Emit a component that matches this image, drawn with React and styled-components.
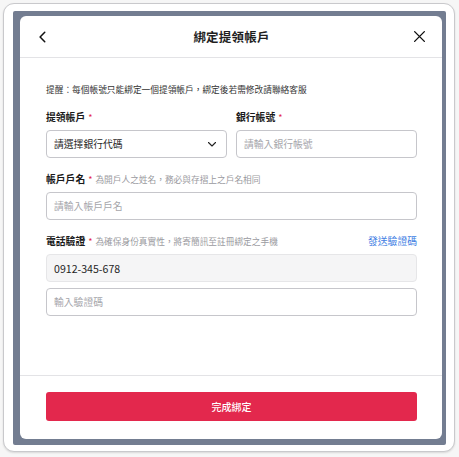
import React from 'react'
import styled, { createGlobalStyle } from 'styled-components'

const GlobalStyle = createGlobalStyle`
  html, body {
    margin: 0;
    padding: 0;
    background: #f6f6f6;
  }
  body {
    font-family: "Noto Sans CJK TC", "Noto Sans", "Liberation Sans", sans-serif;
    color: #1f1f1f;
  }
`

const Page = styled.div`
  width: 459px;
  height: 457px;
  padding: 3px 4px 5px 3px;
  box-sizing: border-box;
`

const Card = styled.div`
  height: 100%;
  box-sizing: border-box;
  background: #fff;
  border: 1px solid #c9c9cc;
  border-radius: 11px;
  box-shadow: 0 1px 2px rgba(0, 0, 0, 0.12);
  padding: 7px 8px 6px 9px;
`

const Frame = styled.div`
  height: 100%;
  box-sizing: border-box;
  background: #737d91;
  border-radius: 2px;
  padding: 5px 4px 6px 7px;
`

const Modal = styled.div`
  height: 100%;
  background: #fff;
  border-radius: 6px;
  display: flex;
  flex-direction: column;
  overflow: hidden;
`

const Header = styled.div`
  height: 41px;
  flex: none;
  display: flex;
  align-items: center;
  justify-content: space-between;
  padding: 0 14px 0 15px;
  border-bottom: 1px solid #e3e3e6;
`

const IconButton = styled.button`
  width: 16px;
  height: 16px;
  padding: 0;
  border: none;
  background: none;
  display: flex;
  align-items: center;
  justify-content: center;
  color: #111;
`

const Title = styled.h1`
  margin: 0;
  font-size: 12.5px;
  font-weight: 700;
  letter-spacing: 0.2px;
`

const Body = styled.div`
  flex: 1;
  padding: 25px 25px 0 26px;
`

const Notice = styled.p`
  margin: 0 0 13px;
  font-size: 8.7px;
  line-height: 14px;
  color: #333;
`

const Row = styled.div`
  display: grid;
  grid-template-columns: ${(p) => p.$cols || '1fr'};
  column-gap: 9px;
  margin-bottom: ${(p) => p.$gap ?? 14}px;
`

const Field = styled.div`
  display: flex;
  flex-direction: column;
`

const LabelLine = styled.div`
  display: flex;
  align-items: baseline;
  height: 14px;
  margin-bottom: 6px;
`

const Label = styled.span`
  font-size: 9.8px;
  font-weight: 700;
  color: #1a1a1a;
`

const Star = styled.span`
  color: #e3284d;
  font-size: 9px;
  margin: 0 3px 0 3px;
`

const Hint = styled.span`
  font-size: 8.7px;
  color: #9a9aa0;
`

const Link = styled.a`
  margin-left: auto;
  font-size: 9.8px;
  color: #3d7de3;
  text-decoration: none;
`

const Input = styled.div`
  height: 28px;
  box-sizing: border-box;
  border: 1px solid ${(p) => (p.$filled ? '#e6e6e8' : '#c6c6cb')};
  border-radius: 4px;
  background: ${(p) => (p.$filled ? '#f5f5f6' : '#fff')};
  display: flex;
  align-items: center;
  justify-content: space-between;
  padding: 0 8px 0 7px;
  font-size: ${(p) => (p.$filled ? '10.6px' : '9.8px')};
  color: ${(p) => (p.$placeholder ? '#a5a5aa' : '#1f1f1f')};
  margin-bottom: ${(p) => p.$mb || 0}px;
`

const Footer = styled.div`
  flex: none;
  border-top: 1px solid #e3e3e6;
  padding: 16px 25px 18px 26px;
`

const Submit = styled.button`
  width: 100%;
  height: 29px;
  border: none;
  border-radius: 3px;
  background: #e3284d;
  color: #fff;
  font-family: inherit;
  font-size: 10px;
  font-weight: 500;
`

const Chevron = ({ dir }) => (
  <svg width="14" height="14" viewBox="0 0 24 24" fill="none" stroke="currentColor" strokeWidth="2.6" strokeLinecap="round" strokeLinejoin="round">
    {dir === 'left' ? <path d="M15 4 7 12l8 8" /> : <path d="m6 9 6 6 6-6" />}
  </svg>
)

export default function App() {
  return (
    <Page>
      <GlobalStyle />
      <Card>
        <Frame>
          <Modal>
            <Header>
              <IconButton aria-label="back">
                <Chevron dir="left" />
              </IconButton>
              <Title>綁定提領帳戶</Title>
              <IconButton aria-label="close">
                <svg width="13" height="13" viewBox="0 0 24 24" fill="none" stroke="currentColor" strokeWidth="2.6" strokeLinecap="round">
                  <path d="M3 3l18 18M21 3 3 21" />
                </svg>
              </IconButton>
            </Header>

            <Body>
              <Notice>提醒：每個帳號只能綁定一個提領帳戶，綁定後若需修改請聯絡客服</Notice>

              <Row $cols="1fr 1fr">
                <Field>
                  <LabelLine>
                    <Label>提領帳戶</Label>
                    <Star>*</Star>
                  </LabelLine>
                  <Input>
                    請選擇銀行代碼
                    <svg width="12" height="12" viewBox="0 0 24 24" fill="none" stroke="#222" strokeWidth="2.2" strokeLinecap="round" strokeLinejoin="round">
                      <path d="m5 9 7 7 7-7" />
                    </svg>
                  </Input>
                </Field>
                <Field>
                  <LabelLine>
                    <Label>銀行帳號</Label>
                    <Star>*</Star>
                  </LabelLine>
                  <Input $placeholder>請輸入銀行帳號</Input>
                </Field>
              </Row>

              <Row>
                <Field>
                  <LabelLine>
                    <Label>帳戶戶名</Label>
                    <Star>*</Star>
                    <Hint>為開戶人之姓名，務必與存摺上之戶名相同</Hint>
                  </LabelLine>
                  <Input $placeholder>請輸入帳戶戶名</Input>
                </Field>
              </Row>

              <Row>
                <Field>
                  <LabelLine>
                    <Label>電話驗證</Label>
                    <Star>*</Star>
                    <Hint>為確保身份真實性，將寄簡訊至註冊綁定之手機</Hint>
                    <Link href="#">發送驗證碼</Link>
                  </LabelLine>
                  <Input $filled $mb={6}>0912-345-678</Input>
                  <Input $placeholder>輸入驗證碼</Input>
                </Field>
              </Row>
            </Body>

            <Footer>
              <Submit>完成綁定</Submit>
            </Footer>
          </Modal>
        </Frame>
      </Card>
    </Page>
  )
}
